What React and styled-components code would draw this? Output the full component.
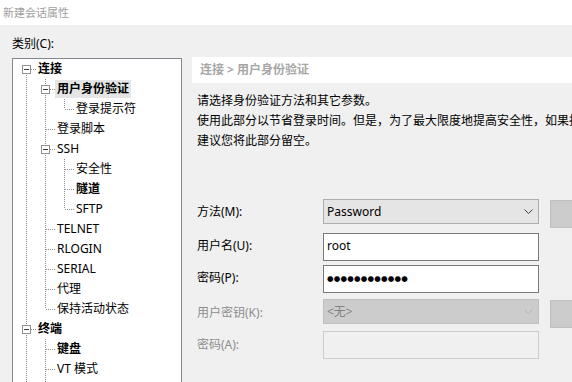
import React from "react";
import styled, { createGlobalStyle } from "styled-components";

const GlobalStyle = createGlobalStyle`
  html, body {
    margin: 0;
    padding: 0;
    width: 572px;
    height: 382px;
    overflow: hidden;
    background: #f0f0f0;
    font-family: "Noto Sans", "Noto Sans CJK SC", sans-serif;
    font-size: 12px;
    color: #000;
  }
`;

const treeRows = [
  { label: "连接", guides: [], box: true, first: true, bold: true },
  { label: "用户身份验证", guides: [true], box: true, bold: true, selected: true },
  { label: "登录提示符", guides: [true, true], last: true },
  { label: "登录脚本", guides: [true] },
  { label: "SSH", guides: [true], box: true },
  { label: "安全性", guides: [true, true] },
  { label: "隧道", guides: [true, true], bold: true },
  { label: "SFTP", guides: [true, true], last: true },
  { label: "TELNET", guides: [true] },
  { label: "RLOGIN", guides: [true] },
  { label: "SERIAL", guides: [true] },
  { label: "代理", guides: [true] },
  { label: "保持活动状态", guides: [true], last: true },
  { label: "终端", guides: [], box: true, bold: true },
  { label: "键盘", guides: [true], bold: true },
  { label: "VT 模式", guides: [true] },
  { label: "高级", guides: [true], last: true },
  { label: "外观", guides: [], box: true, last: true },
];

const Window = styled.div`
  width: 572px;
  height: 382px;
  display: flex;
  flex-direction: column;
`;

const TitleBar = styled.div`
  height: 25px;
  flex: none;
  background: #fff;
  padding-left: 3px;
  line-height: 25px;
  font-size: 11px;
  color: #a0a0a0;
`;

const Body = styled.div`
  flex: 1;
  display: flex;
  gap: 10px;
  padding-left: 12px;
  min-height: 0;
`;

const LeftColumn = styled.div`
  width: 170px;
  flex: none;
  display: flex;
  flex-direction: column;
`;

const CategoryLabel = styled.div`
  margin-top: 11px;
  line-height: 16px;
  height: 16px;
`;

const TreeBox = styled.div`
  margin-top: 6px;
  flex: 1;
  background: #fff;
  border: 1px solid #828790;
  border-bottom: none;
  padding-left: 4px;
  overflow: hidden;
`;

const TreeRow = styled.div`
  display: flex;
  height: 20px;
  align-items: center;
`;

const Cell = styled.svg`
  width: 19px;
  height: 20px;
  flex: none;
  display: block;
`;

const NodeLabel = styled.span`
  height: 18px;
  line-height: 18px;
  padding: 0 2px;
  white-space: nowrap;
  font-weight: ${(p) => (p.$bold ? 700 : 400)};
  background: ${(p) => (p.$selected ? "#e5e5e5" : "transparent")};
`;

const dot = { stroke: "#8c8c8c", strokeWidth: 1, strokeDasharray: "1 1" };

const Guide = ({ on }) => (
  <Cell viewBox="0 0 19 20">
    {on && <line x1="9.5" y1="0" x2="9.5" y2="20" {...dot} />}
  </Cell>
);

const Connector = ({ box, first, last }) => (
  <Cell viewBox="0 0 19 20">
    {!first && <line x1="9.5" y1="0" x2="9.5" y2="10" {...dot} />}
    {!last && <line x1="9.5" y1="10" x2="9.5" y2="20" {...dot} />}
    <line x1="10" y1="10.5" x2="19" y2="10.5" {...dot} />
    {box && (
      <>
        <rect x="5.5" y="6.5" width="8" height="8" fill="#fff" stroke="#919191" />
        <line x1="7" y1="10.5" x2="12" y2="10.5" stroke="#3c3c3c" />
      </>
    )}
  </Cell>
);

const Tree = () => (
  <TreeBox>
    {treeRows.map((r) => (
      <TreeRow key={r.label}>
        {r.guides.map((g, i) => (
          <Guide key={i} on={g} />
        ))}
        <Connector box={r.box} first={r.first} last={r.last} />
        <NodeLabel $bold={r.bold} $selected={r.selected}>
          {r.label}
        </NodeLabel>
      </TreeRow>
    ))}
  </TreeBox>
);

const RightColumn = styled.div`
  flex: 1;
  min-width: 0;
  display: flex;
  flex-direction: column;
`;

const Breadcrumb = styled.div`
  margin-top: 32px;
  height: 26px;
  line-height: 26px;
  background: #fff;
  padding-left: 8px;
  color: #a6a6a6;
  font-weight: 700;
  white-space: nowrap;
`;

const Description = styled.div`
  margin-top: 8px;
  padding-left: 5px;
  line-height: 20px;
  white-space: nowrap;
`;

const Form = styled.div`
  margin-top: 48px;
  padding-left: 5px;
  display: flex;
  flex-direction: column;
`;

const FormRow = styled.div`
  display: grid;
  grid-template-columns: 126px 216px 11px 80px;
  height: ${(p) => p.$h}px;
  margin-top: ${(p) => p.$mt || 0}px;
`;

const FieldLabel = styled.div`
  line-height: ${(p) => p.$h}px;
  height: ${(p) => p.$h}px;
  color: ${(p) => (p.$disabled ? "#8d8d8d" : "#000")};
  white-space: nowrap;
`;

const Combo = styled.div`
  box-sizing: border-box;
  height: 25px;
  border: 1px solid ${(p) => (p.$disabled ? "#bfbfbf" : "#adadad")};
  background: ${(p) => (p.$disabled ? "#cccccc" : "#e5e5e5")};
  color: ${(p) => (p.$disabled ? "#838383" : "#000")};
  display: flex;
  align-items: center;
  justify-content: space-between;
  padding: 0 5px 0 3px;
  line-height: 23px;
`;

const Chevron = styled.svg`
  width: 9px;
  height: 5px;
  display: block;
`;

const TextBox = styled.div`
  box-sizing: border-box;
  height: 28px;
  border: 1px solid ${(p) => (p.$disabled ? "#cccccc" : "#7a7a7a")};
  background: ${(p) => (p.$disabled ? "#f0f0f0" : "#fff")};
  padding-left: 3px;
  line-height: 24px;
  white-space: nowrap;
`;

const Dots = styled.span`
  font-family: "DejaVu Sans", sans-serif;
  font-size: 7.5px;
  letter-spacing: 0.2px;
  vertical-align: 1px;
`;

const SideButton = styled.div`
  grid-column: 4;
  box-sizing: border-box;
  margin-top: 1px;
  height: 28px;
  background: #cccccc;
  border: 1px solid #bfbfbf;
`;

const ComboBox = ({ value, disabled }) => (
  <Combo $disabled={disabled}>
    <span>{value}</span>
    <Chevron viewBox="0 0 9 5">
      <polyline
        points="0.5,0.5 4.5,4.5 8.5,0.5"
        fill="none"
        stroke={disabled ? "#b4b4b4" : "#404040"}
      />
    </Chevron>
  </Combo>
);

export default function App() {
  return (
    <>
      <GlobalStyle />
      <Window>
        <TitleBar>新建会话属性</TitleBar>
        <Body>
          <LeftColumn>
            <CategoryLabel>类别(C):</CategoryLabel>
            <Tree />
          </LeftColumn>
          <RightColumn>
            <Breadcrumb>连接 &gt; 用户身份验证</Breadcrumb>
            <Description>
              请选择身份验证方法和其它参数。
              <br />
              使用此部分以节省登录时间。但是，为了最大限度地提高安全性，如果担心安全性问题，
              <br />
              建议您将此部分留空。
            </Description>
            <Form>
              <FormRow $h={29}>
                <FieldLabel $h={25}>方法(M):</FieldLabel>
                <ComboBox value="Password" />
                <SideButton />
              </FormRow>
              <FormRow $h={28} $mt={5}>
                <FieldLabel $h={26}>用户名(U):</FieldLabel>
                <TextBox>root</TextBox>
              </FormRow>
              <FormRow $h={28} $mt={4}>
                <FieldLabel $h={26}>密码(P):</FieldLabel>
                <TextBox>
                  <Dots>●●●●●●●●●●●●</Dots>
                </TextBox>
              </FormRow>
              <FormRow $h={29} $mt={6}>
                <FieldLabel $h={27} $disabled>
                  用户密钥(K):
                </FieldLabel>
                <ComboBox value="<无>" disabled />
                <SideButton />
              </FormRow>
              <FormRow $h={28} $mt={3}>
                <FieldLabel $h={28} $disabled>
                  密码(A):
                </FieldLabel>
                <TextBox $disabled />
              </FormRow>
            </Form>
          </RightColumn>
        </Body>
      </Window>
    </>
  );
}
